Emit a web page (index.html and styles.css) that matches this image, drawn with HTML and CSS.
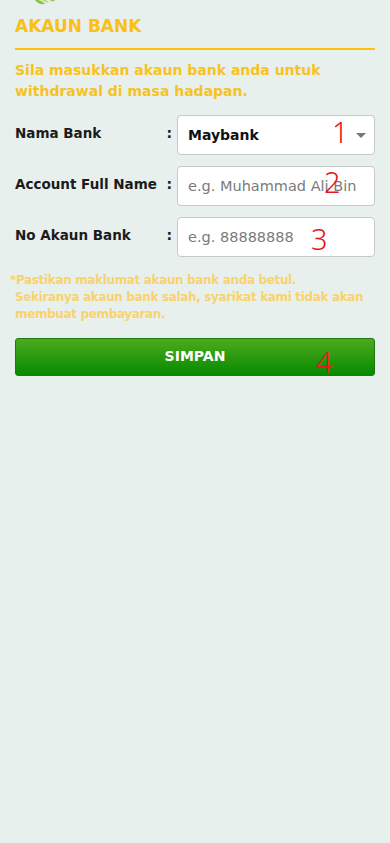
FILE: index.html
```html
<!DOCTYPE html>
<html lang="ms">
<head>
<meta charset="utf-8">
<meta name="viewport" content="width=device-width, initial-scale=1">
<title>Akaun Bank</title>
<link rel="stylesheet" href="styles.css">
</head>
<body>
<div class="page">
  <div class="leaf">
    <svg width="30" height="7" viewBox="0 0 30 7" aria-hidden="true">
      <path d="M2 0 C4 3 8 5 12 4 C10 2 7 0 5 0 Z" fill="#8cc43f"/>
      <path d="M9 0 C11 2 14 3 16 2 C15 1 13 0 12 0 Z" fill="#b6d979"/>
      <path d="M17 0 C18 2 21 2 22 0 Z" fill="#9ccf5a"/>
    </svg>
  </div>
  <h1 class="title">AKAUN BANK</h1>
  <p class="intro">Sila masukkan akaun bank anda untuk withdrawal di masa hadapan.</p>

  <form class="form">
    <div class="row">
      <label class="label">Nama Bank</label>
      <span class="colon">:</span>
      <div class="field select">
        <span class="value">Maybank</span>
        <span class="caret"></span>
        <span class="mark mark1">1</span>
      </div>
    </div>
    <div class="row">
      <label class="label">Account Full Name</label>
      <span class="colon">:</span>
      <div class="field">
        <span class="placeholder">e.g. Muhammad Ali Bin</span>
        <span class="mark mark2">2</span>
      </div>
    </div>
    <div class="row">
      <label class="label">No Akaun Bank</label>
      <span class="colon">:</span>
      <div class="field">
        <span class="placeholder">e.g. 88888888</span>
        <span class="mark mark3">3</span>
      </div>
    </div>
  </form>

  <p class="note"><span class="star">*</span>Pastikan maklumat akaun bank anda betul.<br>Sekiranya akaun bank salah, syarikat kami tidak akan membuat pembayaran.</p>

  <div class="btn">SIMPAN<span class="mark mark4">4</span></div>
</div>
</body>
</html>
```

FILE: styles.css
```css
* { box-sizing: border-box; }
html, body {
  margin: 0;
  padding: 0;
  background: #e8f0ed;
  font-family: "DejaVu Sans", "Noto Sans", sans-serif;
}
.page {
  padding: 0 15px;
  min-height: 843px;
}
.leaf {
  height: 7px;
  padding-left: 18px;
  line-height: 0;
}
.title {
  margin: 0;
  padding: 9px 0 12px;
  font-size: 17px;
  line-height: 20px;
  font-weight: bold;
  color: #fbc012;
  border-bottom: 2px solid #fdc20e;
}
.intro {
  margin: 10px 0 0;
  font-size: 14px;
  line-height: 21px;
  font-weight: bold;
  color: #f8c21e;
  padding-right: 40px;
}
.form {
  margin-top: 13px;
  display: flex;
  flex-direction: column;
  gap: 11px;
}
.row {
  display: grid;
  grid-template-columns: 1fr auto 198px;
  align-items: center;
  column-gap: 5px;
}
.label {
  font-size: 13.5px;
  font-weight: bold;
  color: #1b1b1b;
  margin-top: -4px;
}
.colon {
  font-size: 14px;
  font-weight: bold;
  color: #1b1b1b;
  margin-top: -4px;
}
.field {
  position: relative;
  height: 40px;
  background: #fff;
  border: 1px solid #c8c8c8;
  border-radius: 4px;
  display: flex;
  align-items: center;
  padding: 0 10px;
}
.value {
  font-size: 14px;
  font-weight: bold;
  color: #111;
}
.placeholder {
  flex: 1;
  min-width: 0;
  overflow: hidden;
  font-size: 14.5px;
  color: #7a7a7a;
  white-space: nowrap;
}
.caret {
  position: absolute;
  right: 8px;
  top: 17px;
  width: 0;
  height: 0;
  border-left: 5px solid transparent;
  border-right: 5px solid transparent;
  border-top: 5px solid #777;
}
.mark {
  position: absolute;
  color: #e8141f;
  font-family: "Noto Sans", sans-serif;
  font-weight: 300;
  font-size: 29px;
  line-height: 1;
}
.mark1 { left: 154px; top: 1px; }
.mark2 { left: 146px; top: 0; }
.mark3 { left: 133px; top: 6px; }
.mark4 { left: 300px; top: 8px; }
.note {
  margin: 15px -6px 0 -5px;
  font-size: 12px;
  line-height: 17px;
  font-weight: bold;
  letter-spacing: -0.35px;
  color: #f8d36c;
  padding-left: 5px;
  text-indent: -5px;
}
.btn {
  position: relative;
  margin-top: 15px;
  height: 38px;
  border: 1px solid #1d7a0c;
  border-radius: 3px;
  background: linear-gradient(#4daa1f, #078a00);
  color: #fff;
  font-size: 14px;
  font-weight: bold;
  display: flex;
  align-items: center;
  justify-content: center;
  padding-bottom: 2px;
}
```
